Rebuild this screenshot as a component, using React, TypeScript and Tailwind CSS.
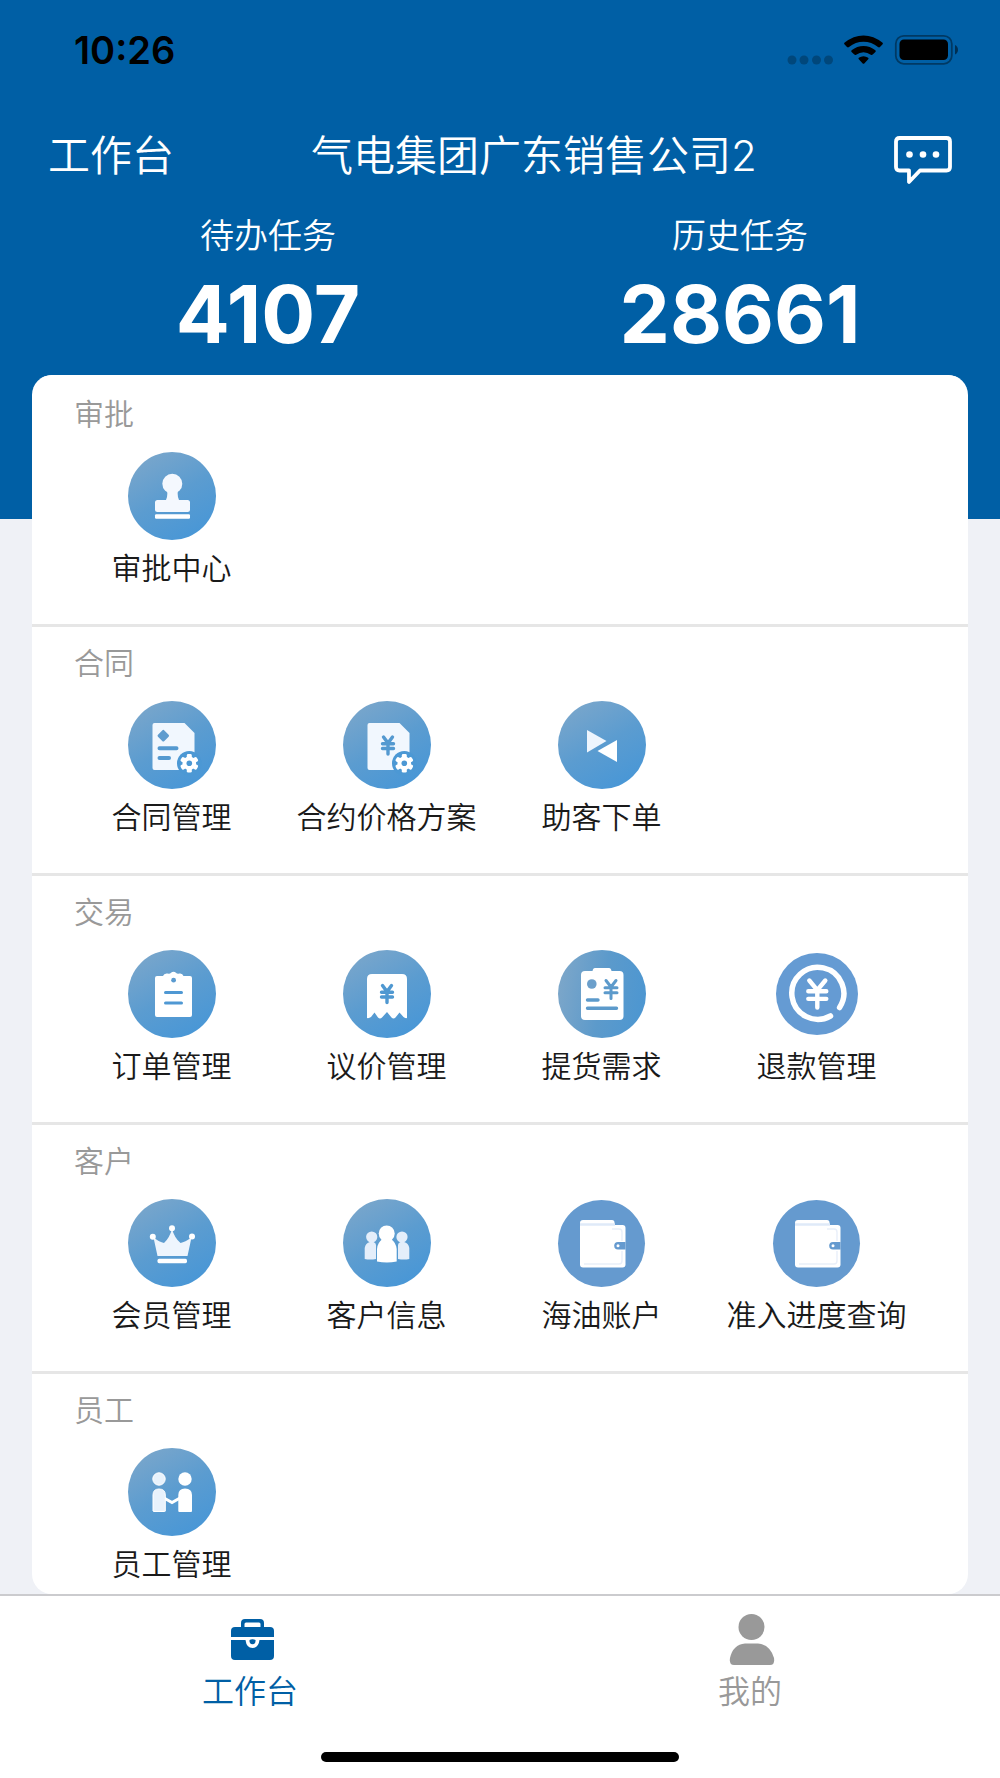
import { ReactNode } from 'react'

interface Entry {
  label: string
  icon: ReactNode
  tone?: string
}

interface Section {
  title: string
  entries: Entry[]
}

const TONE_DEFAULT = 'size-[88px] bg-linear-150 from-[#7fa8ca] via-[#5b9cd0] to-[#4295d8]'
const TONE_SIDE = 'size-[88px] bg-linear-100 from-[#80a8c9] via-[#5c9acb] to-[#4a96d2]'
const TONE_FLAT = 'size-[87px] bg-[#659acf]'
const TONE_SMALL = 'size-[82px] bg-[#659bd3]'

function Glyph({ children }: { children: ReactNode }) {
  return (
    <svg viewBox="0 0 88 88" className="size-[88px] shrink-0" fill="none" aria-hidden="true">
      {children}
    </svg>
  )
}

function Yen({ x, y, w, h, color, stroke }: { x: number; y: number; w: number; h: number; color: string; stroke: number }) {
  const half = w / 2
  const top = y - h / 2
  return (
    <path
      d={`M${x - half + 1} ${top}L${x} ${top + h * 0.36}L${x + half - 1} ${top}M${x} ${top + h * 0.36}V${top + h}M${x - half} ${top + h * 0.4}H${x + half}M${x - half} ${top + h * 0.68}H${x + half}`}
      stroke={color}
      strokeWidth={stroke}
      strokeLinecap="round"
      strokeLinejoin="round"
    />
  )
}

function Gear() {
  return (
    <>
      <circle cx="61.3" cy="62.3" r="12.3" fill="#4c98d4" />
      <circle cx="61.3" cy="62.3" r="6.8" fill="#fff" />
      {[0, 60, 120, 180, 240, 300].map((angle) => (
        <rect
          key={angle}
          x="58.8"
          y="53"
          width="5"
          height="5"
          rx="1.4"
          fill="#fff"
          transform={`rotate(${angle} 61.3 62.3)`}
        />
      ))}
      <circle cx="61.3" cy="62.3" r="2.8" fill="#4c98d4" />
    </>
  )
}

const PAGE_PATH = 'M26.5 22H56.5L66.5 32V67.5Q66.5 69 65 69H26.5Q24.5 69 24.5 67V24Q24.5 22 26.5 22Z'

const StampIcon = (
  <Glyph>
    <circle cx="44.3" cy="31.8" r="10" fill="#f4f8fe" />
    <path d="M39 38H50Q49 44 51 48H59.5Q62 48 62 50.5V57.5Q62 60 59.5 60H29.5Q27 60 27 57.5V50.5Q27 48 29.5 48H38Q40 44 39 38Z" fill="#f4f8fe" />
    <rect x="27" y="62.3" width="35" height="4.4" rx="1.2" fill="#fff" />
  </Glyph>
)

const ContractIcon = (
  <Glyph>
    <path d={PAGE_PATH} fill="#f1f7fe" />
    <rect x="30.8" y="30.2" width="9" height="9" rx="1.5" fill="#5f9ccf" transform="rotate(45 35.3 34.7)" />
    <path d="M31.5 47.3H48.5M31.5 57H41" stroke="#5499d0" strokeWidth="4" strokeLinecap="round" />
    <Gear />
  </Glyph>
)

const PriceIcon = (
  <Glyph>
    <path d={PAGE_PATH} fill="#f1f7fe" />
    <Yen x={45} y={44.5} w={11} h={17} color="#5499d0" stroke={3.4} />
    <Gear />
  </Glyph>
)

const OrderForIcon = (
  <Glyph>
    <path d="M29 29L48.5 40L29 51.5Z" fill="#eef5fd" />
    <path d="M59 39V61L39.5 50Z" fill="#fff" />
  </Glyph>
)

const OrderIcon = (
  <Glyph>
    <path d="M29 26H35Q36 23 39.5 23.5Q42 24 43 22.8Q45.5 20.8 48 22.8Q49 24 51.5 23.5Q54.5 23 55.5 26H62Q64 26 64 28V65Q64 67 62 67H29Q27 67 27 65V28Q27 26 29 26Z" fill="#fff" />
    <circle cx="45.6" cy="30.2" r="2.4" fill="#5b9bd0" />
    <path d="M37.5 42.4H53.5M37.5 53H53.5" stroke="#4f98d3" strokeWidth="3" strokeLinecap="round" />
  </Glyph>
)

const BargainIcon = (
  <Glyph>
    <path d="M29 24H59Q64 24 64 29V68Q62 68.5 60.5 67L56.5 62.5L52.5 67.5Q50.5 69.5 48.5 67.5L44 62L39 67.5Q37 69.5 35 67.5L31.5 62.5L28 67Q26 68.5 24 68V29Q24 24 29 24Z" fill="#fff" />
    <Yen x={44} y={44} w={11} h={17} color="#4f98d1" stroke={3.4} />
  </Glyph>
)

const DemandIcon = (
  <Glyph>
    <path d="M27 21H34.5Q35 18 37 18H51Q53 18 53.5 21H61.5Q65.5 21 65.5 25V66Q65.5 70 61.5 70H27Q23 70 23 66V25Q23 21 27 21Z" fill="#fff" />
    <circle cx="33.8" cy="34" r="4.8" fill="#6b9fcb" />
    <Yen x={53} y={39.5} w={12} h={18} color="#5c9acb" stroke={3} />
    <path d="M29.5 50H40M29.5 58.3H58.5" stroke="#5c9acb" strokeWidth="3.4" strokeLinecap="round" />
  </Glyph>
)

const RefundIcon = (
  <Glyph>
    <path d="M66.6 57.5A26 26 0 1 0 57.5 66" stroke="#fff" strokeWidth="5.5" strokeLinecap="round" />
    <Yen x={44.3} y={44} w={18} h={27} color="#fff" stroke={4.4} />
  </Glyph>
)

const CrownIcon = (
  <Glyph>
    <path d="M25.5 38.5Q31.5 43 36 44Q41.5 39 44 30Q46.5 39 52.5 44Q57 43 63.5 38.5L59.5 57H29.5Z" fill="#eef5fd" />
    <circle cx="44" cy="29.3" r="3" fill="#fff" />
    <circle cx="24.8" cy="37.7" r="3" fill="#fff" />
    <circle cx="64" cy="37.5" r="3" fill="#fff" />
    <rect x="29.5" y="59.8" width="29.5" height="4.4" rx="1.6" fill="#fff" />
  </Glyph>
)

const CustomerIcon = (
  <Glyph>
    <g fill="#e4eefa">
      <circle cx="28.7" cy="38" r="5.6" />
      <circle cx="59" cy="38" r="5.6" />
      <path d="M21.7 60V49Q22.5 44 27 43H30.5Q33 44 33 46V60Q27 61 21.7 60Z" />
      <path d="M66.3 60V49Q65.5 44 61 43H57.5Q55 44 55 46V60Q61 61 66.3 60Z" />
    </g>
    <path d="M34 62.5V50Q34.5 43.5 39.5 40H48Q53 43.5 53.7 50V62.5Q44 64.5 34 62.5Z" fill="#fff" />
    <circle cx="43.7" cy="34.5" r="8" fill="#fff" />
  </Glyph>
)

const WalletIcon = (
  <Glyph>
    <path d="M25 21H54Q56.5 21 56.5 23.5V29H22V24Q22 21 25 21Z" fill="#fff" />
    <path d="M22 26H64.5Q67.5 26 67.5 29V65.5Q67.5 68.5 64.5 68.5H25Q22 68.5 22 65.5Z" fill="#fff" />
    <path d="M22 25.5H57" stroke="#dfeaf8" strokeWidth="2.5" />
    <path d="M26 65H61Q64 65 64 62V52M64 42V33Q64 30 61 30H54" stroke="#e9eff9" strokeWidth="1.4" />
    <path d="M67.5 43H60A3.8 3.8 0 0 0 60 50.6H67.5Z" fill="#659acf" />
    <circle cx="60" cy="46.8" r="1.5" fill="#fff" />
  </Glyph>
)

const StaffIcon = (
  <Glyph>
    <path d="M36 50L44 54.5L52 50" stroke="#fff" strokeWidth="3" />
    <g fill="#e8f2fc" stroke="#fff" strokeWidth="1">
      <circle cx="31" cy="31" r="6.2" />
      <path d="M25 63V47Q25 41 31 41Q37.3 41 37.3 47V63Q37.3 63.5 36.5 63.5H25.5Z" />
    </g>
    <g fill="#fff">
      <circle cx="57" cy="31" r="6.7" />
      <path d="M50.3 63V47Q50.3 40.5 57 40.5Q64 40.5 64 47V63Q64 64 63 64H51.3Q50.3 64 50.3 63Z" />
    </g>
  </Glyph>
)

const SECTIONS: Section[] = [
  { title: '审批', entries: [{ label: '审批中心', icon: StampIcon }] },
  {
    title: '合同',
    entries: [
      { label: '合同管理', icon: ContractIcon },
      { label: '合约价格方案', icon: PriceIcon },
      { label: '助客下单', icon: OrderForIcon },
    ],
  },
  {
    title: '交易',
    entries: [
      { label: '订单管理', icon: OrderIcon },
      { label: '议价管理', icon: BargainIcon },
      { label: '提货需求', icon: DemandIcon, tone: TONE_SIDE },
      { label: '退款管理', icon: RefundIcon, tone: TONE_SMALL },
    ],
  },
  {
    title: '客户',
    entries: [
      { label: '会员管理', icon: CrownIcon },
      { label: '客户信息', icon: CustomerIcon },
      { label: '海油账户', icon: WalletIcon, tone: TONE_FLAT },
      { label: '准入进度查询', icon: WalletIcon, tone: TONE_FLAT },
    ],
  },
  { title: '员工', entries: [{ label: '员工管理', icon: StaffIcon }] },
]

const TASKS = [
  { label: '待办任务', count: 4107 },
  { label: '历史任务', count: 28661 },
]

function StatusBar() {
  return (
    <div className="flex h-[100px] items-center justify-between pr-[42px] pl-[74px] text-black">
      <span className="text-[38px] leading-none font-semibold">10:26</span>
      <svg viewBox="0 0 172 32" className="h-8 w-[172px]" aria-hidden="true">
        <g fill="#000" fillOpacity="0.25">
          <circle cx="6" cy="26" r="4.5" />
          <circle cx="18" cy="26" r="4.5" />
          <circle cx="30.5" cy="26" r="4.5" />
          <circle cx="42.5" cy="26" r="4.5" />
        </g>
        <path d="M58.4 8.8Q67.5 1.5 77.5 1.5T96.6 8.8Q97.3 9.6 96.6 10.3L94 13Q93 13.8 92 13Q85.5 7.8 77.5 7.8T63 13Q62 13.8 61 13L58.4 10.3Q57.7 9.6 58.4 8.8Z" />
        <path d="M65.6 16.3Q71 12 77.5 12T89.4 16.3Q90.2 17.2 89.4 18L86.7 20.6Q85.7 21.4 84.8 20.7Q81.5 18.2 77.5 18.2T70.2 20.7Q69.3 21.4 68.3 20.6L65.6 18Q64.8 17.2 65.6 16.3Z" />
        <path d="M72.8 23.7Q75 22.2 77.5 22.2T82.2 23.7Q83 24.5 82.2 25.3L78.3 29.5Q77.5 30.2 76.7 29.5L72.8 25.3Q72 24.5 72.8 23.7Z" />
        <rect x="109.8" y="1.8" width="56" height="28" rx="8" fill="none" stroke="#000" strokeOpacity="0.4" strokeWidth="1.8" />
        <rect x="113.5" y="5.5" width="48.5" height="20.5" rx="4.5" />
        <path d="M169 11Q172 12.5 172 15.8T169 20.5Z" fillOpacity="0.5" />
      </svg>
    </div>
  )
}

function EntryButton({ label, icon, tone = TONE_DEFAULT }: Entry) {
  return (
    <button type="button" className="flex flex-col items-center">
      <span className="flex size-[88px] items-center justify-center">
        <span className={`flex items-center justify-center rounded-full ${tone}`}>{icon}</span>
      </span>
      <span className="mt-2 text-[30px] leading-10 font-[350] whitespace-nowrap text-[#1a1a1a]">{label}</span>
    </button>
  )
}

function TabBar() {
  return (
    <nav className="border-t-2 border-[#cbcbce] bg-white font-[350]">
      <div className="grid grid-cols-2">
        <a href="#workbench" aria-current="page" className="flex flex-col items-center pt-4 text-[#005fa5]">
          <svg viewBox="-3 0 52 56" className="h-14 w-[52px]" fill="currentColor" aria-hidden="true">
            <path d="M14 16V11Q14 7 18 7H33Q37 7 37 11V16H33.5V12Q33.5 10.5 32 10.5H19Q17.5 10.5 17.5 12V16Z" />
            <path d="M8 15H43Q47 15 47 19V25H4V19Q4 15 8 15Z" />
            <path d="M4 28H18.5Q19.5 36 25.5 36T32.5 28H47V44Q47 48 43 48H8Q4 48 4 44Z" />
            <path d="M22.5 28Q25.5 26.5 28.5 28Q29 32 25.5 32.3Q22 32 22.5 28Z" />
          </svg>
          <span className="mt-1 text-[32px] leading-10">工作台</span>
        </a>
        <a href="#mine" className="flex flex-col items-center pt-4 text-[#999]">
          <svg viewBox="-1 0 52 56" className="h-14 w-[52px]" fill="currentColor" aria-hidden="true">
            <circle cx="26.5" cy="15" r="13" />
            <path d="M20 31.5H33Q45 32.5 49 46Q50 53 45 53H9Q4 53 5 46Q8 32.5 20 31.5Z" />
          </svg>
          <span className="mt-1 text-[32px] leading-10">我的</span>
        </a>
      </div>
      <div className="mx-auto mt-10 mb-4 h-[10px] w-[358px] rounded-full bg-black" />
    </nav>
  )
}

export default function App() {
  return (
    <div className="flex min-h-screen flex-col bg-[#eff1f6] font-['Inter','Noto_Sans_CJK_SC',sans-serif]">
      <header className="bg-[#005fa5] pb-[165px] text-white">
        <StatusBar />
        <div className="flex items-end justify-between pt-[26px] pr-12 pl-12">
          <span className="text-[42px] leading-[60px] font-[350]">工作台</span>
          <h1 className="text-[42px] leading-[60px] font-[350]">气电集团广东销售公司2</h1>
          <button type="button" aria-label="消息">
            <svg viewBox="0 1 58 50" className="h-[50px] w-[58px]" fill="none" aria-hidden="true">
              <path
                d="M5.5 3H52.5Q56 3 56 6.5V32Q56 35.5 52.5 35.5H26L15 47V35.5H5.5Q2 35.5 2 32V6.5Q2 3 5.5 3Z"
                stroke="currentColor"
                strokeWidth="3.8"
                strokeLinejoin="round"
              />
              <circle cx="15.5" cy="19.5" r="3.3" fill="currentColor" />
              <circle cx="29" cy="19.5" r="3.3" fill="currentColor" />
              <circle cx="42" cy="19.5" r="3.3" fill="currentColor" />
            </svg>
          </button>
        </div>
        <dl className="mt-[30px] grid grid-cols-2 pr-6 pl-8 text-center">
          {TASKS.map((task) => (
            <div key={task.label}>
              <dt className="text-[34px] leading-10 font-[350]">{task.label}</dt>
              <dd className="mt-[18px] text-[80px] leading-[80px] font-bold">{task.count}</dd>
            </div>
          ))}
        </dl>
      </header>

      <main className="mx-8 -mt-[144px] flex-1 overflow-hidden rounded-[20px] bg-white">
        {SECTIONS.map((section) => (
          <section
            key={section.title}
            className="border-t-[3px] border-[#e6e6e6] pt-4 pb-9 first:border-white last:pb-[10px]"
          >
            <h2 className="pl-[42px] text-[30px] leading-10 font-[350] text-[#999]">{section.title}</h2>
            <div className="mt-[18px] grid grid-cols-4 pr-11 pl-8">
              {section.entries.map((entry) => (
                <EntryButton key={entry.label} {...entry} />
              ))}
            </div>
          </section>
        ))}
      </main>

      <TabBar />
    </div>
  )
}
